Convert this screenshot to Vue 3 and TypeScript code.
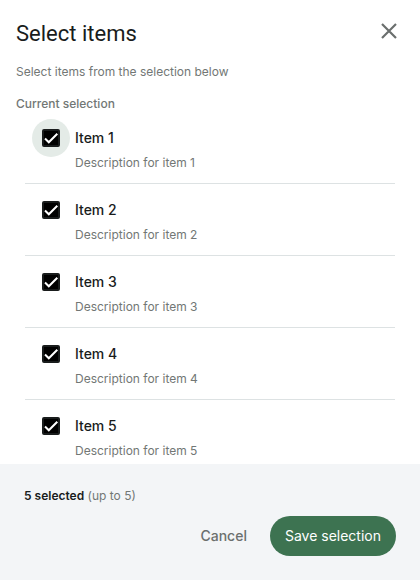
<script setup lang="ts">
import { computed, ref } from 'vue'

interface Item {
  id: number
  name: string
  description: string
}

const items: Item[] = [1, 2, 3, 4, 5].map((n) => ({
  id: n,
  name: `Item ${n}`,
  description: `Description for item ${n}`,
}))

const limit = 5
const initial = items.map((item) => item.id)
const selected = ref<number[]>([...initial])
const focused = ref<number | null>(1)
const count = computed(() => selected.value.length)
const open = ref(true)

function reset() {
  selected.value = [...initial]
}

function close() {
  open.value = false
}
</script>

<template>
  <main v-if="open" class="dialog" role="dialog" aria-labelledby="dialog-title">
    <header class="header">
      <h1 id="dialog-title" class="title">Select items</h1>
      <button class="close" type="button" aria-label="Close" @click="close">
        <svg viewBox="0 0 24 24" width="24" height="24" aria-hidden="true">
          <path d="M5 4 19 18M19 4 5 18" fill="none" stroke="currentColor" stroke-width="2.2" />
        </svg>
      </button>
    </header>

    <section class="body">
      <p class="intro">Select items from the selection below</p>
      <h2 class="subtitle">Current selection</h2>
      <ul class="list">
        <li v-for="item in items" :key="item.id" class="row">
          <span class="halo" :class="{ active: focused === item.id }">
            <input
              :id="`item-${item.id}`"
              v-model="selected"
              class="box"
              type="checkbox"
              :value="item.id"
              :aria-describedby="`description-${item.id}`"
              @focus="focused = item.id"
            />
            <svg class="tick" viewBox="0 0 18 18" width="18" height="18" aria-hidden="true">
              <path d="M3 9.5 6.8 13.3 15.3 4.8" fill="none" stroke="#fff" stroke-width="2" />
            </svg>
          </span>
          <div class="text">
            <label class="name" :for="`item-${item.id}`">{{ item.name }}</label>
            <p :id="`description-${item.id}`" class="description">{{ item.description }}</p>
          </div>
        </li>
      </ul>
    </section>

    <footer class="footer">
      <p class="summary">
        <strong>{{ count }} selected</strong> (up to {{ limit }})
      </p>
      <div class="actions">
        <button class="button" type="button" @click="reset">Cancel</button>
        <button class="button primary" type="button" @click="close">Save selection</button>
      </div>
    </footer>
  </main>
</template>

<style>
body {
  background: #fff;
}
</style>

<style scoped>
.dialog {
  display: flex;
  flex-direction: column;
  height: 100vh;
  background: #fff;
  color: #191c1c;
  font-family: Inter, "Liberation Sans", sans-serif;
  font-size: 12px;
  line-height: 16px;
}

.dialog * {
  box-sizing: border-box;
}

.header {
  display: flex;
  align-items: flex-start;
  justify-content: space-between;
  flex: none;
  padding: 12px 11px 0 16px;
}

.title {
  margin: 0;
  font-family: Roboto, sans-serif;
  font-size: 22px;
  font-weight: 400;
  line-height: 44px;
}

.close {
  display: flex;
  align-items: center;
  justify-content: center;
  width: 40px;
  height: 40px;
  padding: 0;
  border: 0;
  border-radius: 50%;
  background: none;
  color: #6b6f6e;
  cursor: pointer;
}

.body {
  flex: 1;
  min-height: 0;
  padding: 8px 16px 0;
  overflow-y: auto;
  scrollbar-width: none;
}

.intro,
.subtitle,
.description,
.summary {
  margin: 0;
  color: #727775;
}

.subtitle {
  margin-top: 16px;
  font-size: 12px;
  font-weight: 500;
}

.list {
  margin: 0;
  padding: 0 9px;
  list-style: none;
}

.row {
  display: flex;
  align-items: flex-start;
  gap: 5px;
  height: 72px;
  padding: 7px 0 0 7px;
  border-bottom: 1px solid #dde2e3;
}

.row:last-child {
  border-bottom: 0;
}

.halo {
  display: grid;
  place-items: center;
  flex: none;
  width: 38px;
  height: 38px;
  border-radius: 50%;
}

.halo.active {
  background: #e4ebe7;
}

.box,
.tick {
  grid-area: 1 / 1;
}

.box {
  appearance: none;
  width: 18px;
  height: 18px;
  margin: 0;
  border: 2px solid #191c1c;
  border-radius: 2px;
  outline: none;
  cursor: pointer;
}

.box:checked {
  background: #000;
}

.tick {
  visibility: hidden;
  pointer-events: none;
}

.box:checked + .tick {
  visibility: visible;
}

.text {
  display: flex;
  flex-direction: column;
  gap: 7px;
  padding-top: 9px;
}

.name {
  font-size: 14px;
  font-weight: 500;
  line-height: 20px;
}

.footer {
  flex: none;
  padding: 24px;
  background: #f3f5f7;
}

.summary strong {
  color: #191c1c;
  font-weight: 600;
}

.actions {
  display: flex;
  justify-content: flex-end;
  gap: 8px;
  margin-top: 12px;
}

.button {
  height: 40px;
  padding: 0 15px;
  border: 0;
  border-radius: 20px;
  background: none;
  color: #6b6f6e;
  font-family: Inter, "Liberation Sans", sans-serif;
  font-size: 14px;
  font-weight: 500;
  line-height: 20px;
  cursor: pointer;
}

.primary {
  background: #3d7351;
  color: #fff;
  font-weight: 400;
}
</style>
